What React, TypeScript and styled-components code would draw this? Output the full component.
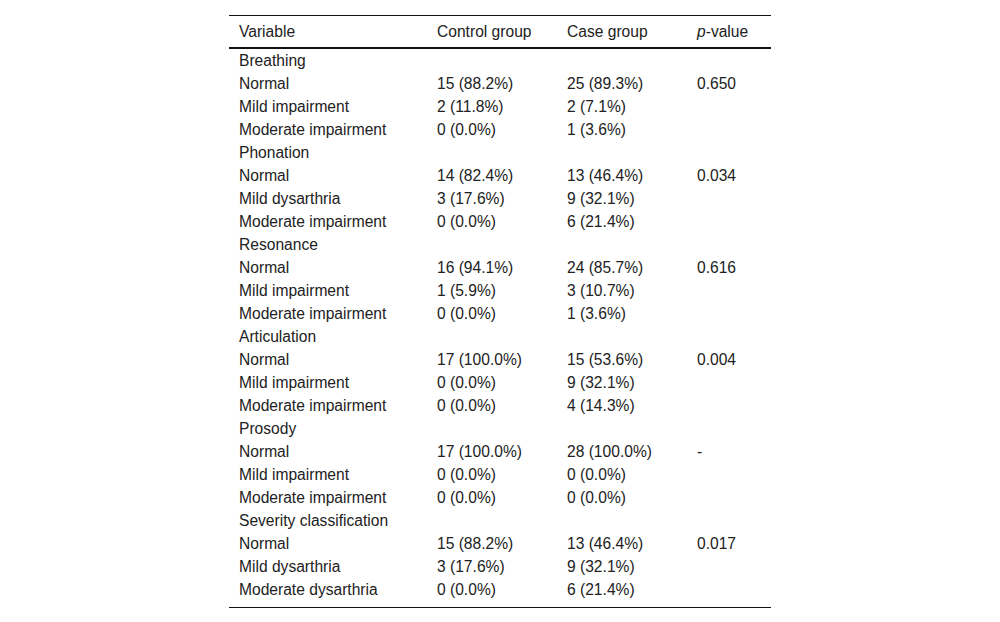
import React from "react";
import styled, { createGlobalStyle } from "styled-components";

const GlobalStyle = createGlobalStyle`
  html, body {
    margin: 0;
    padding: 0;
    background: #ffffff;
  }
  body {
    font-family: "Liberation Sans", Arial, sans-serif;
    color: #222;
  }
`;

const Page = styled.div`
  display: flex;
  justify-content: center;
  padding-top: 15px;
`;

const Table = styled.table`
  width: 542px;
  border-collapse: collapse;
  font-size: 15.6px;
  border-top: 1px solid #111;
  border-bottom: 1px solid #111;
`;

const HeadCell = styled.th<{ $w: number }>`
  width: ${(p) => p.$w}px;
  text-align: left;
  font-weight: normal;
  height: 32px;
  padding: 1px 0 0 10px;
  box-sizing: border-box;
  border-bottom: 2px solid #111;
  vertical-align: middle;
`;

const Row = styled.tr<{ $last?: boolean }>`
  height: ${(p) => (p.$last ? 29 : 23)}px;
`;

const Cell = styled.td<{ $last?: boolean }>`
  padding: 0 0 ${(p) => (p.$last ? 6 : 0)}px 10px;
  white-space: nowrap;
  vertical-align: ${(p) => (p.$last ? "top" : "middle")};
  line-height: 23px;
`;

type Group = {
  title: string;
  p: string;
  rows: [string, string, string][];
};

const groups: Group[] = [
  {
    title: "Breathing",
    p: "0.650",
    rows: [
      ["Normal", "15 (88.2%)", "25 (89.3%)"],
      ["Mild impairment", "2 (11.8%)", "2 (7.1%)"],
      ["Moderate impairment", "0 (0.0%)", "1 (3.6%)"],
    ],
  },
  {
    title: "Phonation",
    p: "0.034",
    rows: [
      ["Normal", "14 (82.4%)", "13 (46.4%)"],
      ["Mild dysarthria", "3 (17.6%)", "9 (32.1%)"],
      ["Moderate impairment", "0 (0.0%)", "6 (21.4%)"],
    ],
  },
  {
    title: "Resonance",
    p: "0.616",
    rows: [
      ["Normal", "16 (94.1%)", "24 (85.7%)"],
      ["Mild impairment", "1 (5.9%)", "3 (10.7%)"],
      ["Moderate impairment", "0 (0.0%)", "1 (3.6%)"],
    ],
  },
  {
    title: "Articulation",
    p: "0.004",
    rows: [
      ["Normal", "17 (100.0%)", "15 (53.6%)"],
      ["Mild impairment", "0 (0.0%)", "9 (32.1%)"],
      ["Moderate impairment", "0 (0.0%)", "4 (14.3%)"],
    ],
  },
  {
    title: "Prosody",
    p: "-",
    rows: [
      ["Normal", "17 (100.0%)", "28 (100.0%)"],
      ["Mild impairment", "0 (0.0%)", "0 (0.0%)"],
      ["Moderate impairment", "0 (0.0%)", "0 (0.0%)"],
    ],
  },
  {
    title: "Severity classification",
    p: "0.017",
    rows: [
      ["Normal", "15 (88.2%)", "13 (46.4%)"],
      ["Mild dysarthria", "3 (17.6%)", "9 (32.1%)"],
      ["Moderate dysarthria", "0 (0.0%)", "6 (21.4%)"],
    ],
  },
];

export default function App() {
  return (
    <>
      <GlobalStyle />
      <Page>
        <Table>
          <thead>
            <tr>
              <HeadCell $w={198}>Variable</HeadCell>
              <HeadCell $w={130}>Control group</HeadCell>
              <HeadCell $w={130}>Case group</HeadCell>
              <HeadCell $w={84}>
                <i>p</i>-value
              </HeadCell>
            </tr>
          </thead>
          <tbody>
            {groups.map((g, gi) => (
              <React.Fragment key={g.title}>
                <Row>
                  <Cell>{g.title}</Cell>
                  <Cell />
                  <Cell />
                  <Cell />
                </Row>
                {g.rows.map((r, ri) => {
                  const last = gi === groups.length - 1 && ri === g.rows.length - 1;
                  return (
                    <Row key={r[0] + ri} $last={last}>
                      <Cell $last={last}>{r[0]}</Cell>
                      <Cell $last={last}>{r[1]}</Cell>
                      <Cell $last={last}>{r[2]}</Cell>
                      <Cell $last={last}>{ri === 0 ? g.p : ""}</Cell>
                    </Row>
                  );
                })}
              </React.Fragment>
            ))}
          </tbody>
        </Table>
      </Page>
    </>
  );
}
